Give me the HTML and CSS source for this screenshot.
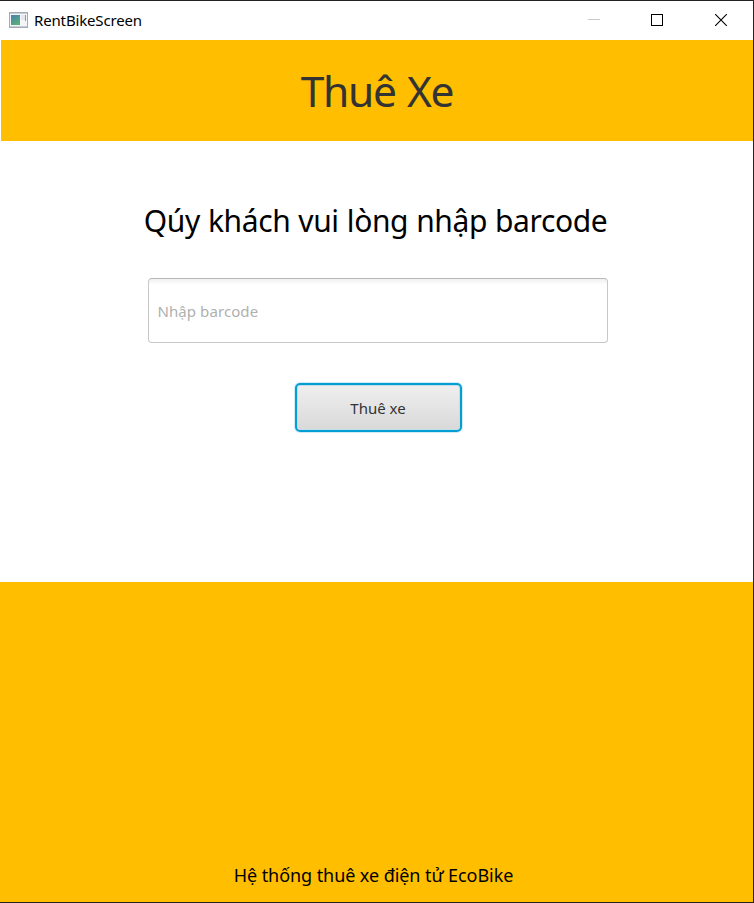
FILE: index.html
```html
<!DOCTYPE html>
<html lang="vi">
<head>
<meta charset="utf-8">
<title>RentBikeScreen</title>
<link rel="stylesheet" href="styles.css">
</head>
<body>
<div class="window">
  <div class="titlebar">
    <svg class="app-icon" width="20" height="17" viewBox="0 0 20 17">
      <defs><linearGradient id="g" x1="0" y1="0" x2=".6" y2="1"><stop offset="0" stop-color="#4580b0"/><stop offset="1" stop-color="#5bae7c"/></linearGradient></defs>
      <rect x=".5" y=".5" width="18" height="15" fill="#f4f5f7" stroke="#a5abb3"/>
      <path d="M1 1.500h17M1 14.500h17" stroke="#c9ced6"/>
      <rect x="2" y="3" width="9" height="10" fill="url(#g)"/>
      <rect x="12" y="3" width="4" height="5" fill="#e6e8ec"/>
      <rect x="16" y="3" width="1" height="6" fill="#6fae90"/>
    </svg>
    <span class="caption">RentBikeScreen</span>
    <div class="controls">
      <svg width="64" height="39" viewBox="0 0 64 39" shape-rendering="crispEdges"><path d="M26 18.5h12" stroke="#c8c8c8"/></svg>
      <svg width="63" height="39" viewBox="0 0 63 39" shape-rendering="crispEdges"><rect x="25.500" y="13.500" width="11" height="11" fill="none" stroke="#000"/></svg>
      <svg width="64" height="39" viewBox="0 0 64 39"><path d="M26.200 13.200l11.600 11.600M37.800 13.200l-11.600 11.600" stroke="#000" stroke-width="1.100"/></svg>
    </div>
  </div>
  <header class="header"><h1>Thuê Xe</h1></header>
  <main class="content">
    <h2>Qúy khách vui lòng nhập barcode</h2>
    <input class="barcode" type="text" placeholder="Nhập barcode">
    <button class="rent" type="button">Thuê xe</button>
  </main>
  <footer class="footer"><span>Hệ thống thuê xe điện tử EcoBike</span></footer>
</div>
</body>
</html>
```
FILE: styles.css
```css
* { box-sizing: border-box; }
body { margin: 0; font-family: "Noto Sans", "Open Sans", sans-serif; }
.window {
  width: 754px; height: 903px; display: flex; flex-direction: column;
  background: #fff; border: solid #26221f; border-width: 1px 1px 1px 0;
}
.titlebar { height: 39px; flex: none; display: flex; align-items: center; padding-left: 9px; }
.app-icon { flex: none; }
.caption { margin-left: 5px; padding-bottom: 2px; font-size: 15px; line-height: 20px; letter-spacing: -0.15px; white-space: nowrap; }
.controls { margin-left: auto; display: flex; }
.header {
  height: 101px; flex: none; margin-left: 1px; background: #ffbe00;
  display: flex; justify-content: center; align-items: center;
}
h1, h2 { margin: 0; font-weight: 400; white-space: nowrap; }
h1 { font-size: 42.5px; line-height: 60px; letter-spacing: -1.3px; word-spacing: 1.5px; color: #333; }
.content { height: 441px; flex: none; display: flex; flex-direction: column; align-items: center; padding-top: 58px; }
h2 { margin-right: 2px; font-size: 30px; line-height: 44px; letter-spacing: -0.4px; word-spacing: 0.7px; color: #000; }
.barcode {
  width: 460px; height: 65px; margin: 35px 0 0 2px; padding: 0 9px;
  border: 1px solid #c8c8c8; border-top-color: #b8b8b8; border-radius: 4px; outline: 0;
  background: linear-gradient(#f0f0f0, #fff 6px);
  font: 15px "Noto Sans", sans-serif; letter-spacing: 0.08px;
}
.barcode::placeholder { color: #b0b0b0; opacity: 1; }
.rent {
  width: 167px; height: 49px; margin: 40px 0 0 3px; padding: 0;
  border: 2px solid #039ed3; border-radius: 5px;
  background: linear-gradient(#efefef, #d9d9d9);
  box-shadow: 0 0 0 1px #d2ecf6, inset 0 0 0 1px #c3dfe8;
  font: 15px "Noto Sans", sans-serif; color: #333;
}
.footer { flex: 1; background: #ffbe00; display: flex; justify-content: center; align-items: flex-end; padding: 0 6px 14px 0; }
.footer span { font-size: 18px; line-height: 26px; letter-spacing: -0.07px; white-space: nowrap; color: #000; }
```
